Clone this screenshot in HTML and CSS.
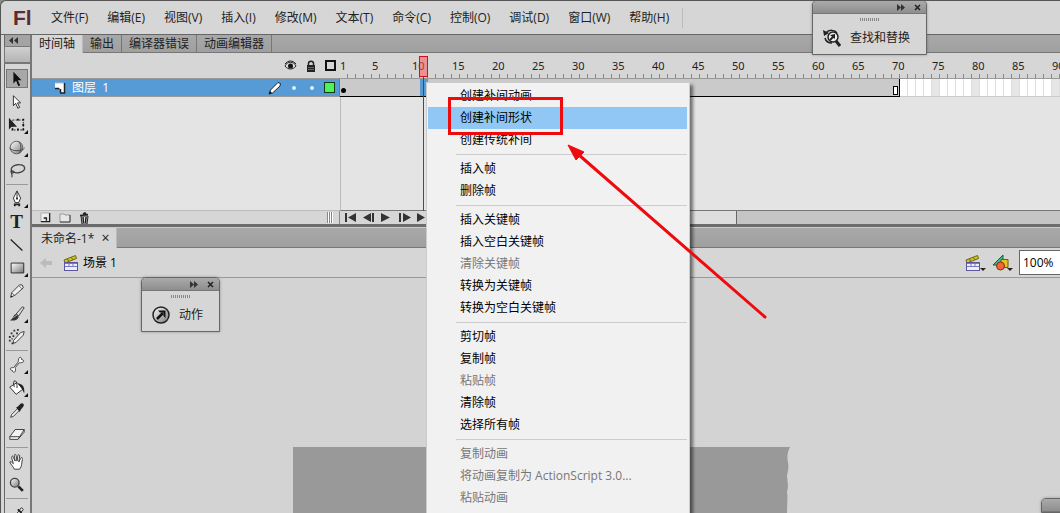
FILE: index.html
```html
<!DOCTYPE html>
<html lang="zh-CN">
<head>
<meta charset="utf-8">
<title>Fl</title>
<link rel="stylesheet" href="styles.css">
</head>
<body>
<svg class="defs" aria-hidden="true">
	<defs>
		<linearGradient id="metal" x1="0" y1="0" x2="1" y2="1">
			<stop offset="0" stop-color="#fff"/>
			<stop offset="1" stop-color="#777"/>
		</linearGradient>
		<symbol id="clapper" viewBox="0 0 16 16">
			<path d="M1 5L12.500 .500L13.500 3.500L2 8z" fill="#d6c61c" stroke="#6c6410"/>
			<path d="M4.500 4l1 2M8.500 2.500l1 2" stroke="#6c6410"/>
			<rect x="1.500" y="7.500" width="13" height="8" fill="#eeeeff" stroke="#5a56a0"/>
			<path d="M2 8.500h12M2 11.500h12M6 8v3M10 8v3" stroke="#7a76c0"/>
		</symbol>
		<symbol id="page" viewBox="0 0 12 12">
			<path d="M1 1h10v10H6V6H1z" fill="#fff"/>
			<path d="M1 1h9" stroke="#bbb"/>
			<path d="M10.500 1v10H6M1 6.500h4M6.500 7v4" fill="none" stroke="#222" stroke-width="1.500"/>
		</symbol>
		<symbol id="sheet" viewBox="0 0 12 12">
			<path d="M1 1h10v10H1z" fill="#eee"/>
			<path d="M1 1v10M1 1h9" stroke="#aaa"/>
			<path d="M10.500 1v9.500H1M4 6.500h3v3" fill="none" stroke="#222" stroke-width="1.500"/>
		</symbol>
	</defs>
</svg>
<div id="app">
	<div class="menubar">
		<b class="logo">Fl</b>
		<button>文件(F)</button>
		<button>编辑(E)</button>
		<button>视图(V)</button>
		<button>插入(I)</button>
		<button>修改(M)</button>
		<button>文本(T)</button>
		<button>命令(C)</button>
		<button>控制(O)</button>
		<button>调试(D)</button>
		<button>窗口(W)</button>
		<button>帮助(H)</button>
		<i></i>
	</div>
	<div class="work">
		<!-- 工具箱 -->
		<div class="toolbox">
			<div class="fold"><svg width="10" height="7"><path d="M4 0v7L0 3.500zM9 0v7L5 3.500z" fill="#333"/></svg></div>
			<div class="cap"></div>
			<div class="tools">
				<button class="active"><svg viewBox="0 0 20 20"><path d="M6 2v13l3-3 2.500 6 2-1-2.500-5.500h4z" fill="#111"/></svg></button>
				<button><svg viewBox="0 0 20 20"><path d="M6 3v11l2.500-2.500L11 17l2-1-2.500-5H14z" fill="#fff" stroke="#222"/></svg></button>
				<button class="more"><svg viewBox="0 0 20 20"><path d="M1 2v13l3-3h6z" fill="#222"/><path d="M5 4.500h12v11H5z" fill="none" stroke="#222" stroke-dasharray="2 1.500"/><path d="M10 3h2v2h-2zM16 3h2v2h-2zM16 9h2v2h-2zM16 14h2v2h-2zM10 14h2v2h-2zM4 14h2v2H4z" fill="#111"/></svg></button>
				<button class="more"><svg viewBox="0 0 20 20"><circle cx="9.500" cy="9.500" r="7" fill="url(#metal)" stroke="#555"/><path d="M1.500 10c3 4 14 4 17 0M12 3c3 3 3 10 0 13" fill="none" stroke="#444"/></svg></button>
				<button><svg viewBox="0 0 20 20"><ellipse cx="11" cy="7.500" rx="7.500" ry="4.500" transform="rotate(-8 11 7)" fill="none" stroke="#444" stroke-width="1.500"/><path d="M4 9c-2 2 0 4 2 3s-1-3-2-1 2 4 0 6" fill="none" stroke="#444" stroke-width="1.300"/></svg></button>
				<hr>
				<button class="more"><svg viewBox="0 0 20 20"><path d="M10 1l4 8-2 5H8L6 9z" fill="#fff" stroke="#222"/><path d="M10 2v7" stroke="#222"/><circle cx="10" cy="9.500" r="1.200" fill="#222"/><path d="M6.500 15h7v3h-2v-1h-3v1h-2z" fill="#222"/></svg></button>
				<button class="letter">T</button>
				<button><svg viewBox="0 0 20 20"><path d="M3 4l13 12" stroke="#222" stroke-width="1.500"/></svg></button>
				<button class="more"><svg viewBox="0 0 20 20"><path d="M3.500 4.500h14v11h-14z" fill="url(#metal)" stroke="#222"/></svg></button>
				<button><svg viewBox="0 0 20 20"><path d="M3 17l1-5 9-9 3 .500 1 3-9 8z" fill="#eee" stroke="#333"/><path d="M12 4l4 4M4 12l3.500 3" stroke="#666"/><path d="M3 17l.500-2 1.500 1.500z" fill="#111"/></svg></button>
				<button class="more"><svg viewBox="0 0 20 20"><path d="M9 10l7-8 2 1-6 9z" fill="#ddd" stroke="#333"/><path d="M2 17c4-1 3-6 7-7l3 3c-1 4-6 5-10 4z" fill="#333"/><path d="M6 14l4-3" stroke="#bbb"/></svg></button>
				<button><svg viewBox="0 0 20 20"><path d="M6 14l8-9 4-1-1 4-8 8-3 1z" fill="#eee" stroke="#333"/><path d="M3 6h2M6 3h2M10 2h2M1 10h2M1 14h2M4 17h2M5 9h2M9 6h2M4 12h1" stroke="#333" stroke-width="2"/></svg></button>
				<hr>
				<button class="more"><svg viewBox="0 0 20 20"><path d="M12 3c1-3 4-1 3 1 3 0 3 3 1 3-2 1-3 0-4 1l-4 5c0 1 1 2 0 4s-3 1-3-1c-3 0-3-3-1-3s3 0 3-1l4-5c1-1 0-2 1-4z" fill="#fff" stroke="#333"/></svg></button>
				<button class="more"><svg viewBox="0 0 20 20"><path d="M2 9l8-5 7 7-8 6z" fill="#fff" stroke="#222"/><path d="M7 9c-3-9 3-9 3-2v3" fill="none" stroke="#222"/><path d="M11 5c5 0 8 4 7 11l-2-4z" fill="#222"/></svg></button>
				<button><svg viewBox="0 0 20 20"><path d="M3 17l1-3 7-7 2 2-7 7z" fill="#eee" stroke="#333"/><path d="M9 6l2-1 3-3c2-2 5 1 3 3l-3 4-1 2z" fill="#222"/></svg></button>
				<button><svg viewBox="0 0 20 20"><path d="M2 13l6-8h10l-5 8zM2 13v3h9l2-3M11 16l7-8V5" fill="#f2f2f2" stroke="#333"/></svg></button>
				<hr>
				<button><svg viewBox="0 0 20 20"><path d="M7 18c-1-3-4-5-5-8 1-1 2 0 4 2L4 5c0-2 2-2 2 0l2 4-1-6c0-2 2-2 2 0l1 6 1-6c0-2 2-1 2 0l-1 7 2-4c1-2 2-1 2 1l-1 6c0 2-1 3-2 5z" fill="#fff" stroke="#333"/></svg></button>
				<button><svg viewBox="0 0 20 20"><circle cx="7.500" cy="7.500" r="4.800" fill="url(#metal)" stroke="#444" stroke-width="1.500"/><path d="M11.500 11.500l5 5" stroke="#222" stroke-width="3"/></svg></button>
				<hr>
				<button><svg viewBox="0 0 20 20"><path d="M4 17l8-9 3-4 2 2-3 4-8 8z" fill="#eee" stroke="#222"/><path d="M11 6l4 4" stroke="#222" stroke-width="2"/></svg></button>
			</div>
		</div>
		<div class="main">
			<div class="tabs">
				<button class="active">时间轴</button>
				<button>输出</button>
				<button>编译器错误</button>
				<button>动画编辑器</button>
			</div>
			<!-- 时间轴 -->
			<div class="timeline">
				<div class="layer-head">
					<svg width="13" height="12" viewBox="0 0 13 12"><path d="M1 6c2-5 9-5 11 0-3 4-8 4-11 0z" fill="#ddd" stroke="#222"/><path d="M1 4c3-4 8-4 11 0" fill="none" stroke="#222"/><circle cx="6.500" cy="6" r="2.500" fill="#111"/></svg>
					<svg width="10" height="12" viewBox="0 0 10 12"><path d="M2.500 6V3.500c0-3 5-3 5 0V6" fill="none" stroke="#222" stroke-width="1.500"/><rect x="1" y="5" width="8" height="7" fill="#222"/><path d="M2 7.500h6M2 9.500h6" stroke="#666"/></svg>
					<span class="box"></span>
				</div>
				<div class="ruler" id="ruler"></div>
				<div class="layer">
					<svg width="12" height="12"><use href="#page"/></svg>
					<span class="name">图层&nbsp; 1</span>
					<svg width="14" height="14" viewBox="0 0 14 14"><path d="M1 13l1.500-4L10 1.500l2.500 1L12 5l-7.500 7z" fill="#fff" stroke="#222"/><path d="M1 13l1-3 2 2z" fill="#111"/></svg>
					<i class="dot"></i>
					<i class="dot"></i>
					<span class="box green"></span>
				</div>
				<div class="frames">
					<div class="span"><i class="key"></i><i class="sel"></i><i class="end"></i></div>
					<div class="blank"></div>
				</div>
				<div class="space"></div>
				<div class="space right"></div>
				<div class="layer-foot">
					<svg width="11" height="11"><use href="#sheet"/></svg>
					<svg width="12" height="11" viewBox="0 0 12 11"><path d="M1 2h4l1 1h5v7H1z" fill="#e8e8e8"/><path d="M1 10V2h4l1 1h5" fill="none" stroke="#999"/><path d="M1 10h10V3" fill="none" stroke="#222"/></svg>
					<svg width="11" height="12" viewBox="0 0 11 12"><path d="M2 4h7l-1 8H3z" fill="#ddd" stroke="#222"/><path d="M1 3.500l8-1M4 2l2-1 1 1M4 5l.500 6M7 5l-.500 6" fill="none" stroke="#222" stroke-width="1.500"/></svg>
					<span class="grip"></span>
				</div>
				<div class="frame-foot">
					<svg width="83" height="11" viewBox="0 0 83 11" fill="#333"><path d="M0 1h2v9H0zM11 1v9L3 5.500zM26 1v9l-8-4.500zM27 1h2v9h-2zM36 1v9l9-4.500zM54 1h2v9h-2zM58 1v9l8-4.500zM72 1v9l8-4.500z"/></svg>
					<div class="scroll"><i></i></div>
				</div>
				<div class="playhead"></div>
			</div>
			<div class="tabs doc">
				<button class="active">未命名-1* <span>×</span></button>
			</div>
			<div class="scene">
				<svg class="back" width="14" height="12" viewBox="0 0 14 12"><path d="M1 6l6-5v3h6v4H7v3z" fill="#bbb"/></svg>
				<svg width="16" height="16"><use href="#clapper"/></svg>
				<span class="name">场景 1</span>
				<button class="more"><svg width="16" height="16"><use href="#clapper"/></svg></button>
				<button class="more"><svg width="17" height="17" viewBox="0 0 17 17"><path d="M1 11L11 1v10z" fill="#35c08a" stroke="#125c3c"/><path d="M9 5.500h7v8H9z" fill="#e4c520" stroke="#6c5c0c"/><circle cx="8.500" cy="12" r="4" fill="#ee6a35" stroke="#8c2c10"/></svg></button>
				<select aria-label="缩放"><option>100%</option></select>
			</div>
			<div class="canvas">
				<svg width="497" height="66" viewBox="0 0 497 66" preserveAspectRatio="none"><path d="M0 0h497c-3 6-3 10-2 16 1 5 0 8-1 12 0 6 2 10 0 17 1 6 0 12 0 21H0z" fill="#999"/></svg>
			</div>
		</div>
	</div>

	<div class="float find">
		<div class="bar"><svg width="8" height="7"><path d="M0 0v7l4-3.500zM4 0v7l4-3.500z" fill="#333"/></svg><svg width="7" height="7"><path d="M1 1l5 5M6 1l-5 5" stroke="#222" stroke-width="1.500"/></svg></div>
		<div class="dots"></div>
		<button><svg width="18" height="18" viewBox="0 0 18 18"><circle cx="10" cy="8" r="5" fill="#eee" stroke="#222" stroke-width="1.500"/><path d="M13 12l4 5" stroke="#222" stroke-width="3"/><path d="M3 4c3-4 9-3 11 0M2 9c1 4 4 5 7 5" fill="none" stroke="#222" stroke-width="1.500"/><path d="M0 1l1 6 5-3zM12 5v5L7 6z" fill="#222"/><path d="M7 11l4-4" stroke="#222" stroke-width="2"/></svg>查找和替换</button>
	</div>
	<div class="float action">
		<div class="bar"><svg width="8" height="7"><path d="M0 0v7l4-3.500zM4 0v7l4-3.500z" fill="#333"/></svg><svg width="7" height="7"><path d="M1 1l5 5M6 1l-5 5" stroke="#222" stroke-width="1.500"/></svg></div>
		<div class="dots"></div>
		<button><svg width="18" height="18" viewBox="0 0 18 18"><circle cx="9" cy="9" r="8" fill="url(#metal)" stroke="#222" stroke-width="1.500"/><path d="M5 13l6-6" stroke="#111" stroke-width="2.500"/><path d="M6 4.500h7.500V12l-2-2V6.500H8z" fill="#111"/></svg>动作</button>
	</div>
	<div class="float corner"><div class="bar"></div></div>

	<!-- 右键菜单 -->
	<div class="popup">
		<button>创建补间动画</button>
		<button class="active">创建补间形状</button>
		<button>创建传统补间</button>
		<hr>
		<button>插入帧</button>
		<button>删除帧</button>
		<hr>
		<button>插入关键帧</button>
		<button>插入空白关键帧</button>
		<button disabled>清除关键帧</button>
		<button>转换为关键帧</button>
		<button>转换为空白关键帧</button>
		<hr>
		<button>剪切帧</button>
		<button>复制帧</button>
		<button disabled>粘贴帧</button>
		<button>清除帧</button>
		<button>选择所有帧</button>
		<hr>
		<button disabled>复制动画</button>
		<button disabled>将动画复制为 ActionScript 3.0...</button>
		<button disabled>粘贴动画</button>
	</div>
	<div class="mark"></div>
	<svg class="arrow" width="202" height="178" viewBox="0 0 202 178"><path d="M12 11l186 162" stroke="#ee0b0e" stroke-width="3" stroke-linecap="round"/><path d="M1 1l16 7-8 8z" fill="#ee0b0e" stroke="#ee0b0e"/></svg>
</div>
<script>
	(function(){
		let oRuler = document.getElementById("ruler"),
			html = "<span class='first'>1</span>";
		for(let i = 5; i <= 90; i += 5){//每5帧一个刻度
			html += "<span>" + i + "</span>";
		}
		oRuler.innerHTML = html;
	})()
</script>
</body>
</html>
```
FILE: styles.css
```css
*{margin: 0;padding: 0;box-sizing: border-box;}
body{
	background: #8a8a8a;
	font: 12px/16px "Open Sans","Noto Sans CJK SC",sans-serif;
	color: #222;
	overflow: hidden;
}
button{
	border: 0;
	background: none;
	font: inherit;
	color: inherit;
	white-space: nowrap;
}
svg{
	display: block;
	flex: none;
}
.defs{
	position: absolute;
	width: 0;
	height: 0;
}
#app{
	position: relative;
	display: flex;
	flex-direction: column;
	height: 100vh;
	overflow: hidden;
	background: #d6d6d6;
	border-top: 1px solid #555;
	border-left: 1px solid #555;
	border-top-left-radius: 6px;
}
.menubar{
	display: flex;
	align-items: center;
	gap: 19px;
	flex: none;
	height: 34px;
	padding-left: 12px;
	border-bottom: 1px solid #666;
}
.menubar .logo{
	width: 19px;
	font: bold 21px/28px "Liberation Sans",sans-serif;
	color: #5c2a30;
}
.menubar i{
	height: 20px;
	margin-left: -6px;
	border-left: 1px solid #bbb;
}
.work{
	display: flex;
	flex: 1;
	min-height: 0;
}

/* 工具箱 */
.toolbox{
	flex: none;
	width: 31px;
	padding-left: 3px;
	border-right: 2px solid #777;
}
.toolbox .fold{
	height: 11px;
	padding: 2px 0 0 4px;
	background: #a4a4a4;
	border-left: 1px solid #666;
}
.toolbox .cap{
	height: 18px;
	background: linear-gradient(#d0d0d0,#b4b4b4);
	border: 1px solid #777;
	border-right: 0;
	border-bottom-width: 2px;
}
.tools{
	display: flex;
	flex-direction: column;
	align-items: center;
	padding: 3px 2px 0 0;
	border-left: 1px solid #666;
}
.tools button{
	position: relative;
	display: flex;
	align-items: center;
	justify-content: center;
	width: 22px;
	height: 19px;
	margin: 2px 0;
}
.tools .active{
	background: #a8a8a8;
	border: 1px solid #777;
}
.tools svg{
	width: 18px;
	height: 18px;
}
.tools .letter{
	font: bold 19px/19px "Liberation Serif",serif;
}
.tools hr{
	width: 22px;
	margin: 2px 0;
	border: 0;
	border-top: 1px solid #999;
}
.more{
	position: relative;
}
.more:after{
	content: "";
	position: absolute;
	right: 0;
	bottom: 0;
	border: 2px solid #111;
	border-top-color: transparent;
	border-left-color: transparent;
}

.main{
	flex: 1;
	min-width: 0;
	display: flex;
	flex-direction: column;
}
.tabs{
	display: flex;
	flex: none;
	height: 18px;
	background: linear-gradient(#a8a8a8,#a0a0a0);
	border-bottom: 1px solid #777;
}
.tabs button{
	height: 17px;
	padding: 0 7px;
	border-right: 1px solid #777;
}
.tabs .active{
	height: 18px;
	background: #d6d6d6;
	border-right-color: #bbb;
}
.doc{
	height: 21px;
	border-top: 1px solid #ccc;
}
.doc .active{
	height: 20px;
	padding: 0 7px 0 9px;
}
.doc span{
	margin-left: 4px;
	font-size: 14px;
}

/* 时间轴 */
.timeline{
	position: relative;
	display: grid;
	grid-template-columns: 308px minmax(0,1fr);
	grid-template-rows: 26px 18px 114px 13px;
	flex: none;
	border-bottom: 3px solid #6c6c6c;
}
.layer-head,.layer{
	display: flex;
	align-items: center;
	padding-right: 4px;
	border-bottom: 1px solid #999;
}
.layer-head{
	justify-content: flex-end;
	gap: 9px;
}
.box{
	width: 11px;
	height: 11px;
	border: 2px solid #111;
}
.ruler{
	display: flex;
	overflow: hidden;
	border-bottom: 1px solid #999;
	background: repeating-linear-gradient(90deg,transparent 0 7px,#888 7px 8px) 0 100%/100% 4px no-repeat;
	font: 11px/26px "Noto Sans",sans-serif;
}
.ruler span{
	flex: none;
	width: 40px;
}
.ruler .first{
	width: 32px;
}
.layer{
	padding-left: 22px;
	gap: 6px;
	background: #569bd6;
	border-right: 1px solid #777;
	color: #fff;
}
.layer .name{
	flex: 1;
}
.layer .dot{
	width: 4px;
	height: 4px;
	margin: 0 4px;
	border-radius: 2px;
	background: #d8f4ff;
}
.layer .green{
	background: #4cf45a;
	border: 1px solid #123c12;
}
.frames{
	display: flex;
	overflow: hidden;
}
.frames .span{
	flex: none;
	display: flex;
	justify-content: space-between;
	align-items: flex-end;
	width: 560px;
	background: #cacaca;
	border-right: 1px solid #000;
	border-bottom: 1px solid #000;
}
.frames .key{
	width: 5px;
	height: 5px;
	margin: 0 0 3px 1px;
	border-radius: 3px;
	background: #000;
}
.frames .sel{
	width: 8px;
	height: 17px;
	margin: 0 auto 0 74px;
	background: #569bd6;
}
.frames .end{
	width: 5px;
	height: 9px;
	margin: 0 1px 1px 0;
	border: 1px solid #000;
	background: #fff;
}
.frames .blank{
	flex: 1;
	background:
		repeating-linear-gradient(90deg,transparent 0 7px,#ddd 7px 8px),
		repeating-linear-gradient(90deg,#fff 0 32px,#e6e6e6 32px 40px);
	border-bottom: 1px solid #ccc;
}
.space{
	background: #e4e4e4;
	border-bottom: 1px solid #bbb;
}
.right{
	border-left: 1px solid #bbb;
	border-bottom-color: #777;
}
.layer-foot{
	display: flex;
	align-items: center;
	gap: 8px;
	padding: 0 6px 0 8px;
	border-right: 1px solid #888;
}
.grip{
	width: 6px;
	height: 11px;
	margin-left: auto;
	background: repeating-linear-gradient(90deg,#888 0 1px,#fff 1px 2px);
}
.frame-foot{
	display: flex;
	align-items: center;
	padding-left: 5px;
}
.scroll{
	flex: 1;
	margin-left: 4px;
	height: 13px;
	background: #c5c5c5;
}
.scroll i{
	display: block;
	width: 305px;
	height: 13px;
	background: #dedede;
	border-right: 1px solid #666;
}
.playhead{
	position: absolute;
	left: 387px;
	top: 3px;
	width: 9px;
	height: 21px;
	border: 1px solid #d0101a;
	background: rgba(255,90,90,.55);
}
.playhead:after{
	content: "";
	position: absolute;
	left: 3px;
	top: 20px;
	width: 1px;
	height: 134px;
	background: #d0101a;
}

/* 场景 */
.scene{
	display: flex;
	align-items: center;
	flex: none;
	height: 30px;
	padding-left: 7px;
	border-bottom: 1px solid #999;
	color: #000;
}
.scene .back{
	margin-right: 10px;
}
.scene .name{
	margin: 0 auto 0 4px;
}
.scene .more{
	width: 20px;
	margin-right: 7px;
}
.scene .more:after{
	border: 3px solid transparent;
	border-top-color: #222;
	border-bottom: 0;
	right: -1px;
}
.scene select{
	flex: none;
	width: 64px;
	height: 25px;
	margin-right: -23px;
	padding-left: 3px;
	border: 1px solid #666;
	appearance: none;
	background: #fff;
	font: 12px "Open Sans",sans-serif;
	color: #000;
}
.canvas{
	flex: 1;
	min-height: 0;
	padding: 169px 0 0 261px;
	background: #d3d3d3;
}

/* 浮动面板 */
.float{
	position: absolute;
	background: #d6d6d6;
	border: 1px solid #666;
	border-radius: 5px 5px 0 0;
	box-shadow: 0 0 3px rgba(0,0,0,.3);
}
.float .bar{
	display: flex;
	align-items: center;
	justify-content: flex-end;
	gap: 9px;
	height: 13px;
	padding-right: 5px;
	background: linear-gradient(#aaa,#8e8e8e);
	border-bottom: 1px solid #777;
	border-radius: 4px 4px 0 0;
}
.float .dots{
	width: 20px;
	height: 3px;
	margin: 4px auto 7px;
	background: repeating-linear-gradient(90deg,#888 0 1px,transparent 1px 2px);
}
.float button{
	display: flex;
	align-items: center;
	gap: 9px;
	height: 20px;
	margin: 0 10px 6px;
}
.find{
	right: 133px;
	top: -1px;
	width: 115px;
}
.action{
	left: 140px;
	top: 276px;
	width: 79px;
}
.corner{
	right: -40px;
	bottom: 0;
	width: 59px;
}

/* 右键菜单 */
.popup{
	position: absolute;
	left: 425px;
	top: 81px;
	bottom: 0;
	width: 264px;
	padding: 2px 2px 2px 1px;
	background: #f1f1f1;
	border: 1px solid #ccc;
	border-bottom: 0;
	box-shadow: 3px 3px 3px rgba(0,0,0,.5);
}
.popup button{
	display: block;
	width: 100%;
	height: 22px;
	padding-left: 32px;
	line-height: 20px;
	text-align: left;
	color: #000;
}
.popup .active{
	background: #91c7f5;
}
.popup button:disabled{
	color: #777;
}
.popup hr{
	margin: 3px 0 3px 28px;
	border: 0;
	border-top: 1px solid #ccc;
}
.mark{
	position: absolute;
	left: 447px;
	top: 96px;
	width: 115px;
	height: 38px;
	border: 3px solid #ee0b0e;
}
.arrow{
	position: absolute;
	left: 566px;
	top: 143px;
}
```
